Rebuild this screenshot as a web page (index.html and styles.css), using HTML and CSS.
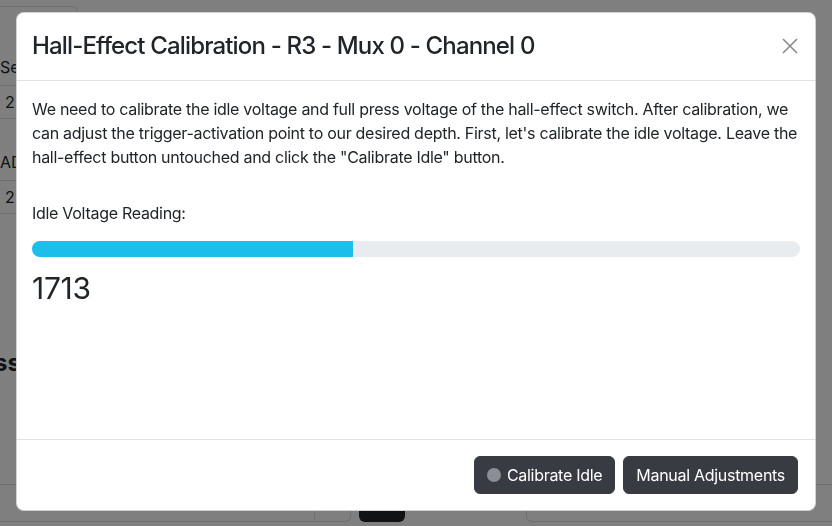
FILE: index.html
```html
<!DOCTYPE html>
<html>
<head>
<meta charset="utf-8">
<link rel="stylesheet" href="styles.css">
</head>
<body>
<div class="page">
  <div class="tabbox"></div>
  <table class="tbl">
    <tr class="th"><td>Settings</td></tr>
    <tr><td class="num">2</td></tr>
    <tr class="th th2"><td>ADC</td></tr>
    <tr><td class="num">2</td></tr>
  </table>
  <h2 class="bg-heading">ss</h2>
  <div class="bottom-row">
    <div class="bbox bbox1"><span class="vline"></span></div>
    <div class="darkbtn"></div>
    <div class="faint"></div>
    <div class="bbox bbox2"></div>
  </div>
</div>

<div class="backdrop"></div>
<div class="modal-wrap">
  <div class="modal">
    <div class="modal-header">
      <h4 class="modal-title">Hall-Effect Calibration - R3 - Mux 0 - Channel 0</h4>
      <button class="btn-close" aria-label="Close">
        <svg width="16" height="16" viewBox="0 0 16 16"><path d="M1 1 L15 15 M15 1 L1 15" stroke="#8a8a8a" stroke-width="1.6" fill="none"/></svg>
      </button>
    </div>
    <div class="modal-body">
      <p class="intro">We need to calibrate the idle voltage and full press voltage of the hall-effect switch. After calibration, we can adjust the trigger-activation point to our desired depth. First, let's calibrate the idle voltage. Leave the hall-effect button untouched and click the "Calibrate Idle" button.</p>
      <div class="label">Idle Voltage Reading:</div>
      <div class="progress"><div class="progress-bar" style="width: 41.83%"></div></div>
      <h3 class="reading">1713</h3>
    </div>
    <div class="modal-footer">
      <button class="btn"><span class="spinner"></span>Calibrate Idle</button>
      <button class="btn">Manual Adjustments</button>
    </div>
  </div>
</div>
</body>
</html>
```

FILE: styles.css
```css
* { box-sizing: border-box; }
html, body { margin: 0; padding: 0; }
body {
  font-family: Inter, "Noto Sans", sans-serif;
  color: #212529;
  background: #fff;
  width: 832px;
  height: 526px;
  overflow: hidden;
}
.page { padding-top: 6px; position: relative; height: 526px; }
.tabbox {
  width: 80px; height: 30px;
  border: 1px solid #dedede; border-left: none; border-bottom: none;
  border-top-right-radius: 6px;
  margin-left: -2px;
}
.tbl { border-collapse: collapse; margin-left: -2px; margin-top: 9px; width: 300px; }
.tbl td { border-bottom: 1px solid #dedede; padding: 0 0 0 2px; font-size: 16px; }
.tbl .th td { height: 40px; vertical-align: bottom; padding-bottom: 8px; }
.tbl .th2 td { height: 62px; }
.tbl .num { height: 33px; padding-left: 0; text-indent: 7px; }
.bg-heading { font-size: 24px; font-weight: 700; margin: 134px 0 0 -6px; line-height: 30px; }
.bottom-row { display: flex; margin-top: 106px; height: 38px; }
.bbox { border: 1px solid #dedede; height: 38px; position: relative; }
.bbox1 { width: 353px; margin-left: -2px; border-left: none; border-radius: 0 0 6px 0; }
.vline { position: absolute; left: 316px; top: 0; width: 1px; height: 34px; background: #dedede; }
.darkbtn { width: 46px; height: 38px; background: #212529; border-radius: 0 0 6px 6px; margin-left: 8px; }
.faint { width: 121px; }
.bbox2 { flex: 1; border-radius: 0 0 0 6px; border-right: none; }

.backdrop { position: fixed; inset: 0; background: rgba(0,0,0,0.5); }
.modal-wrap { position: fixed; inset: 0; padding: 12px 16px 0 16px; }
.modal {
  width: 800px; background: #fff; border-radius: 8px;
  border: 1px solid rgba(0,0,0,0.18);
  display: flex; flex-direction: column;
}
.modal-header {
  display: flex; align-items: center; justify-content: space-between;
  padding: 15px 16px 16px 15px;
  border-bottom: 1px solid #dee2e6;
}
.modal-title { margin: 0; font-size: 24px; font-weight: 500; line-height: 36px; letter-spacing: -0.035em; }
.btn-close { background: none; border: none; padding: 0; width: 16px; height: 16px; margin-right: 1px; display: flex; }
.modal-body { padding: 16px 15px; height: 358px; }
.intro { margin: 0 0 32px; font-size: 16px; line-height: 24px; letter-spacing: -0.018em; }
.label { font-size: 16px; line-height: 24px; margin-bottom: 16px; letter-spacing: -0.018em; }
.progress { height: 16px; background: #e9ecef; border-radius: 8px; overflow: hidden; }
.progress-bar { height: 100%; background: #1ebeeb; }
.reading { margin: 14px 0 0; font-size: 30px; font-weight: 400; line-height: 34px; letter-spacing: -0.01em; }
.modal-footer {
  display: flex; justify-content: flex-end; align-items: center;
  padding: 12px 13px 12px 12px; border-top: 1px solid #dee2e6;
}
.btn {
  font-family: Inter, "Noto Sans", sans-serif;
  font-size: 16px; line-height: 24px; color: #fff; letter-spacing: -0.018em;
  background: #383c42; border: 1px solid #383c42; border-radius: 6px;
  padding: 6px 12px; margin: 4px; display: flex; align-items: center;
}
.spinner { width: 14px; height: 14px; border-radius: 50%; background: #8b8e92; margin-right: 6px; display: inline-block; }
```
